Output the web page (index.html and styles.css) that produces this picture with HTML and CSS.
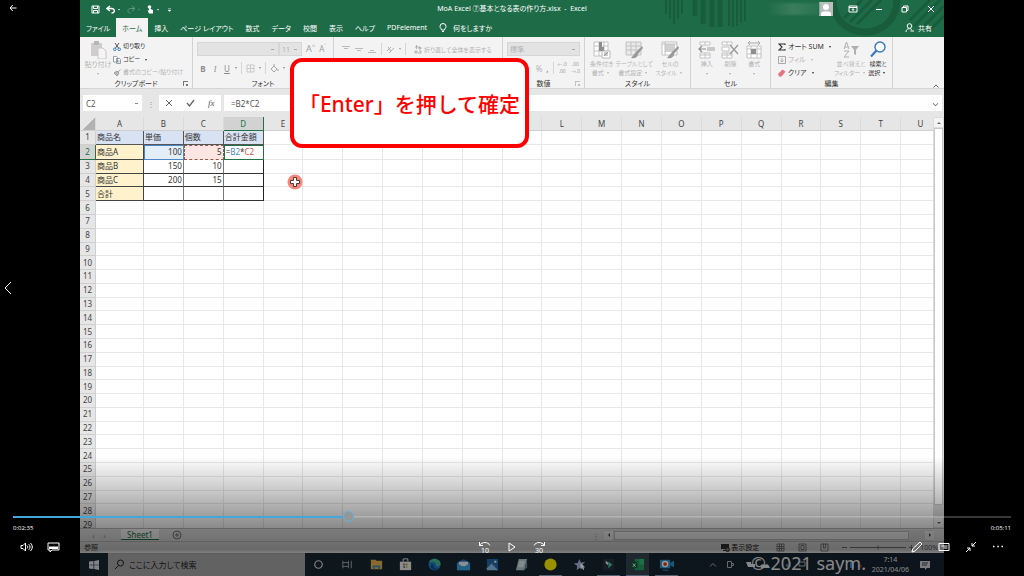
FILE: index.html
```html
<!DOCTYPE html>
<html lang="ja">
<head>
    <meta charset="UTF-8">
    <meta name="viewport" content="width=device-width, initial-scale=1.0">
    <title>MoA Excel ⑦基本となる表の作り方</title>
    <link rel="stylesheet" href="styles.css">
</head>
<body>
<div class="player">
    <div class="screen">
        <header class="excel-head">
            <svg class="pattern" viewBox="0 0 280 37" aria-hidden="true">
                <g stroke="#195c3c" fill="none">
                    <path stroke-width="2" d="M2 0v14M6 0v19M10 0v24M14 0v19M18 0v14"/>
                    <path stroke-width="5" d="M31 0v16M39 0v24M48 0v27M56 0v27"/>
                    <path stroke-width="2" d="M65 0v26M69 0v27M73 0v26M77 0v23M81 0v21"/>
                    <path stroke-width="7" d="M169 0c0 17 12 32 32 32s32-15 32-32"/>
                    <path stroke-width="3" d="M180 18l18-18M186 22l22-22M193 24l24-24M246 20l20-20M250 26l26-26M257 29l23-23M264 32l16-16"/>
                </g>
            </svg>
            <div class="titlebar">
                <div class="quick">
                    <svg width="9" height="9" viewBox="0 0 9 9"><path d="M1 1h7v7H1zM2.500 1v2.500h4V1M2.500 8V5.500h4V8" class="line"/></svg>
                    <svg width="14" height="9" viewBox="0 0 14 9"><path d="M4 1L1 3.500l3 2.500M1 3.500h4.500c4 0 3.500 4.500 0 4.500" class="line bold"/><path d="M12 4h2l-1 1.500z" fill="#fff"/></svg>
                    <svg width="14" height="9" viewBox="0 0 14 9" opacity=".3"><path d="M6 1l3 2.500L6 6M9 3.500H4.500C1 3.500 1 8 4.500 8" class="line"/><path d="M12 4h2l-1 1.500z" fill="#fff"/></svg>
                    <svg width="14" height="9" viewBox="0 0 14 9"><circle cx="3.500" cy="2" r="1.800" fill="#fff"/><path d="M3 1.500v4L1.500 5 3 8.500h4V5L4.500 4V1.500z" fill="#fff"/><path d="M11 4h2l-1 1.500z" fill="#fff"/></svg>
                    <svg width="6" height="9" viewBox="0 0 6 9"><path d="M2 3.500h3M2 5h3L3.500 6.500z" fill="#fff" stroke="#fff" stroke-width=".4"/></svg>
                </div>
                <h1 class="doc-title">MoA Excel ⑦基本となる表の作り方.xlsx &nbsp;-&nbsp; Excel</h1>
                <div class="window-tools">
                    <span class="user-name"></span>
                    <svg class="avatar" width="14" height="14" viewBox="0 0 14 14"><path d="M0 0h14v14H0z" fill="#b9bdbb"/><circle cx="7" cy="5" r="3" fill="#fff"/><path d="M2 14V11.500c0-3 10-3 10 0V14z" fill="#fff"/></svg>
                    <button aria-label="リボンの表示"><svg width="10" height="8" viewBox="0 0 10 8"><path d="M1 1h8v6H1zM1 2.500h8M5 6V3.800M3.800 4.800L5 3.600l1.200 1.200" class="line"/></svg></button>
                    <button aria-label="最小化"><svg width="8" height="8" viewBox="0 0 8 8"><path d="M1 4.500h6" class="line"/></svg></button>
                    <button aria-label="元に戻す"><svg width="8" height="8" viewBox="0 0 8 8"><path d="M1 2.500h4.500V7H1zM2.500 2.500V1H7v4.500H5.500" class="line"/></svg></button>
                    <button aria-label="閉じる"><svg width="8" height="8" viewBox="0 0 8 8"><path d="M1 1l6 6M7 1L1 7" class="line"/></svg></button>
                </div>
            </div>
            <nav class="tabs">
                <button>ファイル</button>
                <button class="active">ホーム</button>
                <button>挿入</button>
                <button>ページ レイアウト</button>
                <button>数式</button>
                <button>データ</button>
                <button>校閲</button>
                <button>表示</button>
                <button>ヘルプ</button>
                <button>PDFelement</button>
                <button class="tell"><svg width="8" height="10" viewBox="0 0 8 10"><path d="M2.500 7C2.500 5.500 1 5 1 3.500a3 3 0 0 1 6 0C7 5 5.500 5.500 5.500 7zM3 8.500h2" class="line"/></svg>何をしますか</button>
                <button class="share"><svg width="9" height="9" viewBox="0 0 9 9"><circle cx="4.500" cy="3" r="2.300" class="line"/><path d="M1 9c0-4 5-4 6-2M5.500 8H9" class="line"/></svg>共有</button>
            </nav>
        </header>

        <section class="ribbon">
            <div class="group">
                <div class="group-body">
                    <button class="big off paste">
                        <svg width="18" height="18" viewBox="0 0 18 18"><path d="M2 2h11v13H2z" fill="#cfcdcd"/><path d="M5 0h5v4H5z" fill="#b5b5b5"/><path d="M9 7h5l3 3v8H9z" fill="#f7f4f6" stroke="#c6c6c6"/></svg>
                        <span>貼り付け</span><i class="arrow"></i>
                    </button>
                    <div class="stack clip">
                        <button><svg width="8" height="8" viewBox="0 0 8 8"><path d="M2 0l3.500 5M6 0L2.500 5" stroke="#555" fill="none"/><circle cx="1.800" cy="6.300" r="1.300" stroke="#3c78b4" fill="none"/><circle cx="6.200" cy="6.300" r="1.300" stroke="#3c78b4" fill="none"/></svg>切り取り</button>
                        <button><svg width="8" height="8" viewBox="0 0 8 8"><path d="M.5.5h3l1 1V6h-4zM3.500 2.500h3l1 1v4h-4z" fill="#fff" stroke="#7c8996" stroke-width=".8"/><path d="M4.500 5h2M4.500 6h2" stroke="#3c78b4" stroke-width=".5"/></svg>コピー <i class="arrow"></i></button>
                        <button class="off"><svg width="8" height="8" viewBox="0 0 8 8"><path d="M7.500.5L5 3M1 4l3 3 2-3-2-2z" stroke="#a0a0a0" fill="#b9b9b9"/></svg>書式のコピー/貼り付け</button>
                    </div>
                </div>
                <div class="caption">クリップボード<i class="launcher"></i></div>
            </div>

            <div class="group">
                <div class="group-body tools">
                    <div class="tool-row">
                        <select class="combo wide" aria-label="フォント" disabled><option></option></select>
                        <select class="combo size" aria-label="フォント サイズ" disabled><option>11</option></select>
                        <button class="glyph">A<sup>^</sup></button>
                        <button class="glyph small">A<sup>˅</sup></button>
                    </div>
                    <div class="tool-row letters">
                        <button><b>B</b></button>
                        <button><em>I</em></button>
                        <button><u>U</u></button>
                        <i class="arrow"></i>
                        <span class="rule"></span>
                        <button aria-label="罫線"><svg width="9" height="9" viewBox="0 0 9 9"><path d="M1 1h7v7H1zM4.500 1v7M1 4.500h7" fill="none" stroke="#c9c9c9"/></svg></button>
                        <i class="arrow"></i>
                        <span class="rule"></span>
                        <button aria-label="塗りつぶし"><svg width="9" height="9" viewBox="0 0 9 9"><path d="M1 5l3-3 3 3-3 3zM4 0v3M8 5v2" fill="none" stroke="#a7a7a7"/></svg></button>
                        <i class="arrow"></i>
                    </div>
                </div>
                <div class="caption">フォント</div>
            </div>

            <div class="group">
                <div class="group-body tools">
                    <div class="tool-row aligns">
                        <svg width="9" height="9" viewBox="0 0 9 9"><path d="M0 1.500h8M2 3.500h4" stroke="#bbb"/></svg>
                        <svg width="9" height="9" viewBox="0 0 9 9"><path d="M0 3.500h8M2 5.500h4" stroke="#bbb"/></svg>
                        <svg width="9" height="9" viewBox="0 0 9 9"><path d="M0 7.500h8M2 5.500h4" stroke="#bbb"/></svg>
                        <span class="rule"></span>
                        <svg width="9" height="9" viewBox="0 0 9 9"><path d="M1 6l4-4M3 8l5-5M2 2l3 4" stroke="#b0b0b0"/></svg>
                        <i class="arrow"></i>
                        <span class="rule"></span>
                        <button class="wrap-text"><svg width="8" height="9" viewBox="0 0 8 9"><path d="M1 2h3M2.500 0v4M5 1v3h2V2.500H5M1 6h2v2H1zM5 6h2v2H4" fill="none" stroke="#aaa" stroke-width=".9"/></svg>折り返して全体を表示する</button>
                    </div>
                </div>
                <div class="caption">配置</div>
            </div>

            <div class="group">
                <div class="group-body tools">
                    <div class="tool-row">
                        <select class="combo full" aria-label="表示形式" disabled><option>標準</option></select>
                    </div>
                    <div class="tool-row end">
                        <button class="off">%</button>
                        <button><b>,</b></button>
                        <span class="rule"></span>
                        <button class="decimal">←.0<br>.00</button>
                        <button class="decimal">.00<br>→.0</button>
                    </div>
                </div>
                <div class="caption">数値<i class="launcher pale"></i></div>
            </div>

            <div class="group">
                <div class="group-body even">
                    <button class="big off">
                        <svg width="18" height="18" viewBox="0 0 18 18"><path d="M1 1h14v14H1zM1 5h14M1 10h14M6 1v14M11 1v14" fill="#fff" stroke="#c2c2c2"/><path d="M6 1h3v5h2v4H6z" fill="#8e8e8e"/><path d="M9 10h8v7H9z" fill="#fff" stroke="#bbb"/><path d="M11 15l4-4M11 12h4M11 14h4" stroke="#999"/></svg>
                        <span>条件付き</span><span>書式<i class="arrow"></i></span>
                    </button>
                    <button class="big off">
                        <svg width="18" height="18" viewBox="0 0 18 18"><path d="M1 1h15v13H1z" fill="#e9e9e9" stroke="#c2c2c2"/><path d="M1 5h15M1 9h15M6 1v13M11 1v13" stroke="#c2c2c2"/><path d="M17 5l-6 6-5 6c4 1 7-1 7-4l5-6z" fill="#999"/></svg>
                        <span>テーブルとして</span><span>書式設定<i class="arrow"></i></span>
                    </button>
                    <button class="big off">
                        <svg width="18" height="18" viewBox="0 0 18 18"><path d="M1 1h15v13H1z" fill="#fff" stroke="#c2c2c2"/><path d="M4 3h10v8H4z" fill="#d0d0d0"/><path d="M1 3h15M4 1v13" stroke="#c2c2c2"/><path d="M17 5l-6 6-5 6c4 1 7-1 7-4l5-6z" fill="#999"/></svg>
                        <span>セルの</span><span>スタイル<i class="arrow"></i></span>
                    </button>
                </div>
                <div class="caption">スタイル</div>
            </div>

            <div class="group">
                <div class="group-body even">
                    <button class="big off">
                        <svg width="18" height="18" viewBox="0 0 18 18"><path d="M2 1h10v3H2zM7 1v3M2 12h10v5H2zM7 12v5M2 14h10" fill="#fff" stroke="#c2c2c2"/><path d="M9 6h8v4H9z" fill="#c9c9c9"/><path d="M8 8H1M4 5L1 8l3 3" fill="none" stroke="#8e8e8e" stroke-width="1.200"/></svg>
                        <span>挿入</span><i class="arrow"></i>
                    </button>
                    <button class="big off">
                        <svg width="18" height="18" viewBox="0 0 18 18"><path d="M1 1h10v3H1zM6 1v3M1 12h10v5H1zM6 12v5M1 14h10M1 6h7v4H1z" fill="#fff" stroke="#c2c2c2"/><path d="M9 4l8 9M17 4l-8 9" stroke="#9b9b9b" stroke-width="1.400"/></svg>
                        <span>削除</span><i class="arrow"></i>
                    </button>
                    <button class="big off">
                        <svg width="18" height="18" viewBox="0 0 18 18"><path d="M2 5h14v12H2zM2 8h14M2 13h14M6 5v12M12 5v12" fill="#fff" stroke="#c2c2c2"/><path d="M6 8h5v5H6z" fill="#8e8e8e"/><path d="M3 2h12M5 0L3 2l2 2M13 0l2 2-2 2" fill="none" stroke="#aaa"/></svg>
                        <span>書式</span><i class="arrow"></i>
                    </button>
                </div>
                <div class="caption">セル</div>
            </div>

            <div class="group">
                <div class="group-body edit">
                    <div class="stack">
                        <button><svg width="8" height="8" viewBox="0 0 8 8"><path d="M7 2V1H1l3 3-3 3h6V6" fill="none" stroke="#333" stroke-width="1.200"/></svg>オート SUM <i class="arrow"></i></button>
                        <button class="off"><svg width="8" height="8" viewBox="0 0 8 8"><path d="M.5.500h7v7h-7zM4 2v4M2.500 4.500L4 6l1.500-1.500" fill="none" stroke="#a9a9a9"/></svg>フィル <i class="arrow"></i></button>
                        <button><svg width="8" height="8" viewBox="0 0 8 8"><path d="M0 5l4.500-4.500 3 2L3.500 7.500H1z" fill="#e8707c"/></svg>クリア <i class="arrow"></i></button>
                    </div>
                    <button class="big off">
                        <svg width="18" height="18" viewBox="0 0 18 18"><path d="M2 8l2.500-7L7 8M3 6h3M2 10h5l-5 6h5" fill="none" stroke="#b0b0b0"/><path d="M9 5h8l-3 4v5l-2-1V9z" fill="#b0b0b0"/></svg>
                        <span>並べ替えと</span><span>フィルター<i class="arrow"></i></span>
                    </button>
                    <button class="big">
                        <svg width="18" height="18" viewBox="0 0 18 18"><circle cx="11" cy="6" r="5" fill="#fff" stroke="#3d7ab8" stroke-width="1.500"/><path d="M7.500 9.500L2 15.500" stroke="#3d7ab8" stroke-width="2.200"/></svg>
                        <span>検索と</span><span>選択<i class="arrow"></i></span>
                    </button>
                </div>
                <div class="caption">編集</div>
            </div>
            <button class="collapse" aria-label="リボンを折りたたむ"><svg width="6" height="4" viewBox="0 0 6 4"><path d="M.5 3.500L3 1l2.500 2.500" fill="none" stroke="#666"/></svg></button>
        </section>

        <section class="formula-bar">
            <select class="name-box" aria-label="名前ボックス"><option>C2</option></select>
            <span class="dots">⋮</span>
            <div class="formula-tools">
                <button aria-label="キャンセル"><svg width="8" height="8" viewBox="0 0 8 8"><path d="M1 1l6 6M7 1L1 7" fill="none" stroke="#666"/></svg></button>
                <button aria-label="入力"><svg width="9" height="8" viewBox="0 0 9 8"><path d="M1 4l2.500 3L8 1" fill="none" stroke="#666" stroke-width="1.300"/></svg></button>
                <button class="fx">fx</button>
            </div>
            <input class="formula" type="text" value="=B2*C2" aria-label="数式">
            <i class="expand"></i>
        </section>

        <section class="sheet">
            <div class="sheet-view">
                <table class="cells">
                    <colgroup><col class="col-head"><col class="col-a"></colgroup>
                    <thead><tr id="columns"><th class="corner"></th></tr></thead>
                    <tbody id="rows"></tbody>
                </table>
            </div>
            <div class="scroll-v"><i class="up"></i><span></span><i class="down"></i></div>
        </section>

        <section class="sheet-tabs">
            <span class="nav-arrow">‹</span><span class="nav-arrow">›</span>
            <button class="sheet-tab">Sheet1</button>
            <button class="add-sheet" aria-label="新しいシート"><svg width="10" height="10" viewBox="0 0 10 10"><circle cx="5" cy="5" r="4" fill="none" stroke="#777"/><path d="M3 5h4M5 3v4" stroke="#777"/></svg></button>
            <span class="dots grip">⋮</span>
            <div class="scroll-h"><i class="left"></i><span></span><i class="right"></i></div>
        </section>

        <section class="status">
            <span>参照</span>
            <div class="status-right">
                <span class="display-settings"><svg width="9" height="9" viewBox="0 0 9 9"><path d="M0 1h8v5H0zM2 7h3v1H2z" fill="#333"/><circle cx="6.500" cy="6.500" r="2" fill="#888" stroke="#333"/></svg>表示設定</span>
                <svg width="9" height="9" viewBox="0 0 9 9"><path d="M1 1h7v7H1zM1 3.500h7M1 5.500h7M3.500 1v7M5.500 1v7" fill="none" stroke="#666" stroke-width=".8"/></svg>
                <svg width="9" height="9" viewBox="0 0 9 9"><path d="M1 1h7v7H1zM3 2.500h3v4H3z" fill="none" stroke="#666" stroke-width=".8"/></svg>
                <svg width="9" height="9" viewBox="0 0 9 9"><path d="M1 1h7v7H1zM3.500 1v4h2V1" fill="none" stroke="#666" stroke-width=".8"/></svg>
                <span class="zoom"><svg width="74" height="7" viewBox="0 0 74 7"><path d="M0 3.500h5M8 3.500h56M36 1.500v4M67 3.500h5M69.500 1v5" stroke="#777"/></svg>100%</span>
            </div>
        </section>

        <footer class="taskbar">
            <button class="start" aria-label="スタート"><svg width="10" height="10" viewBox="0 0 10 10"><path d="M0 1.500L4.500 1v3.700H0zM5.200.9L10 0v4.700H5.200zM0 5.300h4.500V9L0 8.500zM5.200 5.300H10V10l-4.800-.9z" fill="#d8dde0"/></svg></button>
            <label class="search">
                <svg width="11" height="11" viewBox="0 0 11 11"><circle cx="6.500" cy="4" r="3" fill="none" stroke="#222"/><path d="M4.500 6.500L1 10" stroke="#222"/></svg>
                <input type="text" placeholder="ここに入力して検索" aria-label="検索">
            </label>
            <div class="apps">
                <span><svg viewBox="0 0 16 16"><circle cx="8" cy="8" r="4" fill="none" stroke="#dadada" stroke-width="1.300"/></svg></span>
                <span><svg viewBox="0 0 16 16"><path d="M3 4v2h6V4M3 12v-2h6v2M3 6v4M9 6v4M12 4v8" fill="none" stroke="#a9b0b4"/></svg></span>
                <span><svg viewBox="0 0 16 16"><path d="M2 3h5l1 1h6v9H2z" fill="#e4b04a"/><path d="M4 13V9h8v4h-2v-2H6v2z" fill="#3d86c6"/></svg></span>
                <span><svg viewBox="0 0 16 16"><path d="M2 5h12v9H2z" fill="#e8e8e8"/><path d="M5.500 5V2h5v3" fill="none" stroke="#e8e8e8"/><path d="M5.500 7h2v2h-2z" fill="#d9512c"/><path d="M8.200 7h2v2h-2z" fill="#7fb02e"/><path d="M5.500 9.700h2v2h-2z" fill="#2b95d6"/><path d="M8.200 9.700h2v2h-2z" fill="#f0b52a"/></svg></span>
                <span><svg viewBox="0 0 16 16"><circle cx="8" cy="8" r="6.500" fill="#1d78c8"/><path d="M2 6c3-7 12-4 12.500 1 0 3-5 4-5 1 0-3-4-4-7.500-2z" fill="#48b890"/><path d="M7 8c-1 4 3 5 6 4-3 3-8 2-9-1-.5-2 1-4 3-3z" fill="#0e4f8c"/></svg></span>
                <span><svg viewBox="0 0 16 16"><path d="M1 6l7-4 7 4v8H1z" fill="#1b6fb5"/><path d="M3 5h10v5H3z" fill="#e8eef2"/><path d="M1 6l7 5 7-5v8H1z" fill="#3aa0e0"/></svg></span>
                <span><svg viewBox="0 0 16 16"><path d="M2 2h12v12H2z" fill="#2468a8"/><path d="M2 12l5-5 7 7H2z" fill="#8ac0e8"/><circle cx="11" cy="5" r="1.300" fill="#d8e8f4"/></svg></span>
                <span><svg viewBox="0 0 16 16"><path d="M5 2h9l-3 12H2z" fill="#a8c6cc"/><path d="M6 4h6l-2 7H4z" fill="#d9e6e6"/><path d="M11 14l3-12v9z" fill="#698b93"/></svg></span>
                <span class="open"><svg viewBox="0 0 16 16"><circle cx="8" cy="8" r="6.500" fill="#fff200"/></svg></span>
                <span><svg viewBox="0 0 16 16"><path d="M8 2l1.500 4L14 5l-3 3.500L13 13l-4-2-4 3 .500-4.500L2 7l4-.5z" fill="#a2b4dc"/><path d="M9 6l5 5-2 .3 1 2-1.200.5-1-2L9 13z" fill="#fff"/></svg></span>
                <span class="open"><svg viewBox="0 0 16 16"><path d="M2 2h12v12H2z" fill="#26323a"/><path d="M5 4l3 2v3L5 7z" fill="#e2e9e8"/><path d="M8 5l4 3-4 4V9l1-1-1-1z" fill="#4ac8ac"/></svg></span>
                <span class="open current"><svg viewBox="0 0 16 16"><path d="M5 2h10v12H5z" fill="#249a5e"/><path d="M10 2h5v6h-5z" fill="#35b877"/><path d="M1 5h7v7H1z" fill="#0e5c36"/><path d="M3 7l3 3.500M6 7l-3 3.500" stroke="#fff"/></svg></span>
                <span class="open"><svg viewBox="0 0 16 16"><path d="M1 3h11v9H1z" fill="#2d93c4"/><path d="M12 6l4-2v7l-4-2z" fill="#2d93c4"/><circle cx="6.500" cy="7.500" r="3.500" fill="#fff"/><circle cx="6.500" cy="7.500" r="2" fill="#e03820"/><path d="M4 14h6" stroke="#2d93c4"/></svg></span>
            </div>
            <div class="tray">
                <svg width="8" height="8" viewBox="0 0 8 8"><path d="M1 5.500l3-3 3 3" fill="none" stroke="#a9b0b8"/></svg>
                <svg width="9" height="9" viewBox="0 0 9 9"><path d="M1.500 1.500h4v6h-4zM5.500 3.500h2v2h-2z" fill="none" stroke="#a9b0b8"/></svg>
                <svg width="30" height="9" viewBox="0 0 30 9"><path d="M2 2h5v2h4v3H4zM17 8c-2-3 2-5 4-3 3-2 4 1 5 3z" fill="#dfe4e8"/></svg>
                <svg width="80" height="9" viewBox="0 0 80 9"><path d="M4 7V4M7 7V2M16 2h6v4h-6z" fill="none" stroke="#a9b0b8"/><path d="M67 1h4v7h-4z" fill="#2f80d8"/><circle cx="77" cy="6" r="1.500" fill="#c03838"/></svg>
                <time class="clock"><span>7:14</span><span>2021/04/06</span></time>
                <svg class="notice" width="10" height="10" viewBox="0 0 10 10"><path d="M0 1h10v7H7L5 10V8H0z" fill="#c9cdd2"/><path d="M2 3h6M2 5h5" stroke="#394350"/></svg>
            </div>
        </footer>

        <!-- 動画に重ねる説明 -->
        <div class="callout">「Enter」を押して確定</div>
        <svg class="pointer" width="16" height="16" viewBox="0 0 16 16"><circle cx="8" cy="8" r="7.500" fill="#f6857b"/><path d="M6.500 3.500h3v3h3v3h-3v3h-3v-3h-3v-3h3z" fill="#fff" stroke="#4c3a3a"/></svg>
        <div class="watermark">© 2021 saym.</div>
    </div>

    <div class="shade"></div>
    <button class="back" aria-label="戻る"><svg width="8" height="8" viewBox="0 0 8 8"><path d="M7.500 4H1M3.800 1L1 4l2.800 3" class="line"/></svg></button>
    <button class="previous" aria-label="前へ"><svg width="8" height="14" viewBox="0 0 8 14"><path d="M7 1L1 7l6 6" class="line"/></svg></button>

    <div class="controls">
        <input class="seek" type="range" min="0" max="100" step="0.1" value="33.4" aria-label="再生位置" style="--played: 33.4%">
        <div class="times"><span>0:02:35</span><span>0:05:11</span></div>
        <div class="buttons">
            <div>
                <button aria-label="音量"><svg width="13" height="12" viewBox="0 0 13 12"><path d="M1 4.500h2L5.500 2v8L3 7.500H1zM7 4.500c1 1 1 2 0 3M8.700 3.200c1.800 1.600 1.800 4 0 5.600M10.400 2c2.500 2.300 2.500 5.700 0 8" class="line"/></svg></button>
                <button aria-label="字幕"><svg width="13" height="12" viewBox="0 0 13 12"><path d="M1 2h11v7H5l-2 2V9H1z" class="line"/><path d="M2 5.500h9V8H2z" fill="#fff"/></svg></button>
            </div>
            <div>
                <button aria-label="10秒戻す"><svg width="14" height="14" viewBox="0 0 14 14"><path d="M1.500 2v3.500H5M1.500 5.500C4 1.500 10 1.500 12 5.500" class="line"/><text x="3" y="13">10</text></svg></button>
                <button aria-label="再生"><svg width="10" height="12" viewBox="0 0 10 12"><path d="M2 2l6 4-6 4z" class="line"/></svg></button>
                <button aria-label="30秒進む"><svg width="14" height="14" viewBox="0 0 14 14"><path d="M12.500 2v3.500H9M12.500 5.500C10 1.500 4 1.500 2 5.500" class="line"/><text x="3" y="13">30</text></svg></button>
            </div>
            <div>
                <button aria-label="編集"><svg width="12" height="12" viewBox="0 0 12 12"><path d="M1 11l1-3.500 7-6.500 2 2-7 7z" class="line"/></svg></button>
                <button aria-label="ミニ表示"><svg width="12" height="12" viewBox="0 0 12 12"><path d="M1 2.500h10v7H1z" class="line"/><path d="M3.500 5h6M5.500 7h4" class="line"/></svg></button>
                <button aria-label="全画面の終了"><svg width="12" height="12" viewBox="0 0 12 12"><path d="M11 1L7 5M7 2v3h3M1 11l4-4M2 7h3v3" class="line"/></svg></button>
                <button aria-label="その他"><svg width="12" height="12" viewBox="0 0 12 12"><path d="M1 5.500h1.500M5.300 5.500h1.500M9.500 5.500H11" class="line bold"/></svg></button>
            </div>
        </div>
    </div>
</div>
<script src="script.js"></script>
</body>
</html>
```

FILE: styles.css
```css
* {
    box-sizing: border-box;
}
body {
    margin: 0;
    background: #000;
    font-family: "Noto Sans", "Noto Sans CJK JP", sans-serif;
    font-size: 7px;
    font-feature-settings: "palt";
    color: #333;
}
button, input, select {
    font: inherit;
    font-feature-settings: inherit;
    color: inherit;
    background: none;
    border: 0;
    padding: 0;
    margin: 0;
    appearance: none;
}
button {
    white-space: nowrap;
}
svg {
    display: block;
    flex: none;
}
.line {
    fill: none;
    stroke: #fff;
    stroke-width: 1;
}
.line.bold {
    stroke-width: 1.5;
}
.player {
    position: relative;
    height: 100vh;
    overflow: hidden;
}
.screen {
    position: relative;
    display: flex;
    flex-direction: column;
    height: 100%;
    margin: 0 80px;
    background: #e6e6e6;
    overflow: hidden;
}

/* タイトルバーとタブ */
.excel-head {
    position: relative;
    background: #1e6b47;
    color: #fff;
}
.pattern {
    position: absolute;
    right: 0;
    top: 0;
    height: 37px;
}
.titlebar {
    position: relative;
    display: grid;
    grid-template-columns: 1fr auto 1fr;
    align-items: center;
    height: 18px;
}
.quick {
    display: flex;
    gap: 6px;
    padding-left: 11px;
}
.doc-title {
    margin: 0;
    font-size: 7px;
    font-weight: 400;
    line-height: 10px;
}
.window-tools {
    display: flex;
    align-items: center;
    justify-content: flex-end;
}
.window-tools button {
    display: flex;
    justify-content: center;
    width: 26px;
}
.user-name {
    width: 52px;
    height: 12px;
    background: linear-gradient(90deg, #1e6b47, #3b7d5d, #2b7350);
    filter: blur(1px);
}
.avatar {
    margin-right: 7px;
}
.tabs {
    position: relative;
    display: flex;
    height: 19px;
}
.tabs button {
    display: flex;
    align-items: center;
    gap: 6px;
    padding: 0 6px;
}
.tabs .active {
    background: #f3f3f3;
    color: #1e6b47;
}
.tabs .share {
    margin-left: auto;
    padding-right: 12px;
    gap: 4px;
}

/* リボン */
.ribbon {
    position: relative;
    display: grid;
    grid-template-columns: 113fr 141fr 169fr 82fr 106fr 80fr 122fr 51fr;
    height: 52px;
    background: #f3f3f3;
    border-bottom: 1px solid #d4d4d4;
}
.group {
    display: flex;
    flex-direction: column;
    min-width: 0;
    padding: 4px 4px 0;
    border-right: 1px solid #d2d2d2;
}
.group-body {
    display: flex;
    flex: 1;
    min-height: 0;
}
.caption {
    position: relative;
    height: 9px;
    line-height: 10px;
    text-align: center;
}
.launcher {
    position: absolute;
    right: 0;
    top: 2px;
    width: 5px;
    height: 5px;
    border-top: 1px solid #777;
    border-left: 1px solid #777;
}
.launcher::after {
    content: "";
    position: absolute;
    right: 0;
    bottom: 0;
    width: 2px;
    height: 2px;
    background: #777;
}
.launcher.pale {
    opacity: .4;
}
.off {
    color: #b3b3b3;
}
.arrow {
    display: inline-block;
    margin: 0 3px;
    border: 1px solid transparent;
    border-top: 2px solid currentColor;
    border-bottom: 0;
    vertical-align: middle;
}
.big {
    display: flex;
    flex-direction: column;
    align-items: center;
    line-height: 9px;
}
.big svg {
    margin-bottom: 1px;
}
.big > .arrow {
    margin-top: 4px;
}
.paste {
    width: 28px;
}
.stack {
    display: flex;
    flex-direction: column;
    justify-content: space-between;
    padding-bottom: 1px;
}
.stack button {
    display: flex;
    align-items: center;
    gap: 2px;
    line-height: 11px;
}
.clip {
    padding-left: 1px;
    font-size: 6px;
}
.even {
    justify-content: space-around;
    font-size: 6px;
}
.edit {
    justify-content: space-between;
    padding: 0 3px;
}
.edit .big {
    font-size: 6px;
}
.tools {
    flex-direction: column;
    gap: 5px;
    padding-top: 1px;
}
.tool-row {
    display: flex;
    align-items: center;
    gap: 4px;
    height: 14px;
    color: #a0a0a0;
}
.tool-row .arrow {
    margin: 0;
}
.combo {
    height: 14px;
    padding: 0 2px;
    background: linear-gradient(#aaa, #aaa) no-repeat right 4px center / 3px 1px #e3e3e3;
    border: 1px solid #d6d6d6;
    color: #b5b5b5;
    opacity: 1;
}
.combo.wide {
    flex: 1;
    margin-right: -4px;
}
.combo.size {
    width: 23px;
}
.combo.full {
    flex: 1;
}
.glyph {
    font-size: 9px;
    line-height: 10px;
}
.glyph.small {
    font-size: 8px;
    margin-right: 3px;
}
.glyph sup {
    font-size: 6px;
    line-height: 0;
}
.letters {
    gap: 4px;
    padding-left: 2px;
    font-size: 8px;
    color: #8c8c8c;
}
.letters button {
    min-width: 8px;
}
.letters em {
    font-family: "Liberation Serif", serif;
}
.rule {
    width: 1px;
    height: 12px;
    background: #d6d6d6;
}
.aligns {
    padding-left: 4px;
}
.wrap-text {
    display: flex;
    align-items: center;
    gap: 2px;
    margin-left: 4px;
    font-size: 6px;
    color: #b3b3b3;
}
.end {
    justify-content: flex-end;
    font-size: 8px;
}
.decimal {
    font-size: 5px;
    line-height: 7px;
}
.collapse {
    align-self: end;
    justify-self: end;
    padding: 0 5px;
}

/* 数式バー */
.formula-bar {
    position: relative;
    display: flex;
    align-items: center;
    height: 28px;
    padding: 0 2px 0 3px;
    font-size: 8px;
    color: #555;
}
.name-box {
    width: 59px;
    height: 16px;
    padding: 0 3px;
    background: linear-gradient(#888, #888) no-repeat right 4px center / 3px 1px #fff;
}
.dots {
    width: 17px;
    text-align: center;
    color: #999;
}
.formula-tools {
    display: flex;
    align-items: center;
    justify-content: space-around;
    width: 62px;
    height: 16px;
    background: #fff;
}
.fx {
    font-family: "Liberation Serif", serif;
    font-style: italic;
    font-size: 9px;
}
.formula {
    flex: 1;
    height: 16px;
    margin-left: 3px;
    padding: 0 7px;
    background: #fff;
}
.expand {
    position: absolute;
    right: 6px;
    width: 5px;
    height: 5px;
    border-right: 1px solid #666;
    border-bottom: 1px solid #666;
    transform: rotate(45deg) scale(.8);
}

/* シート */
.sheet {
    display: flex;
    flex: 1;
    min-height: 0;
    background: #fff;
}
.sheet-view {
    flex: 1;
    min-width: 0;
    overflow: hidden;
}
.cells {
    width: calc(100% + 8px);
    height: calc(100% + 4px);
    table-layout: fixed;
    border-collapse: separate;
    border-spacing: 0;
    font-size: 8px;
    line-height: 10px;
}
.col-head {
    width: 16px;
}
.col-a {
    width: 48px;
}
.cells th, .cells td {
    padding: 0 1px;
    border-right: 1px solid #e8e8e8;
    border-bottom: 1px solid #e8e8e8;
    white-space: nowrap;
    overflow: hidden;
}
.cells th {
    padding: 0;
    background: #e6e6e6;
    border-color: #cfcfcf;
    font-weight: 400;
    color: #444;
}
.cells thead th {
    height: 14px;
    border-right-color: #dadada;
}
.cells .corner {
    background: linear-gradient(135deg, #e6e6e6 55%, #b2b2b2 55%);
}
.cells th.selected {
    background: #d2d2d2;
    color: #217346;
    border-color: #217346;
}
.cells td.title {
    background: #d9e2f3;
    border-color: #555;
}
.cells td.item {
    background: #fff2cc;
    border-color: #444;
}
.cells td.value {
    border-color: #333;
    border-right-color: #777;
    text-align: right;
}
.cells td.last {
    border-right-color: #222;
}
.cells td.ref-b {
    background: #e4eef8;
    border: 1px solid #4a86c8;
}
.cells td.ref-c {
    background: #fbe6e4;
    border: 1px dashed #8f5a4a;
}
.cells td.editing {
    border: 1px solid #217346;
    text-align: left;
}
.blue {
    color: #4a86c8;
}
.red {
    color: #c8544a;
}
.scroll-v {
    display: flex;
    flex-direction: column;
    width: 11px;
    padding: 1px;
    background: #dcdcdc;
}
.scroll-v span {
    flex: 1;
    margin: 1px 0 13px;
    background: #fff;
    border: 1px solid #c8c8c8;
}
.scroll-v i, .scroll-h i {
    display: flex;
    align-items: center;
    justify-content: center;
    width: 9px;
    height: 9px;
    background: #f4f4f4;
}
.scroll-v i::after, .scroll-h i::after {
    content: "";
    border: 2px solid transparent;
}
.scroll-v .up::after {
    border-bottom-color: #666;
    border-top: 0;
}
.scroll-v .down::after {
    border-top-color: #666;
    border-bottom: 0;
}
.scroll-h .left::after {
    border-right-color: #444;
    border-left: 0;
}
.scroll-h .right::after {
    border-left-color: #444;
    border-right: 0;
}
.sheet-tabs {
    display: flex;
    align-items: center;
    height: 13px;
    padding: 0 10px 0 8px;
    border-top: 1px solid #b9b9b9;
    font-size: 8px;
}
.nav-arrow {
    width: 11px;
    text-align: center;
    color: #999;
}
.sheet-tab {
    align-self: flex-start;
    width: 38px;
    height: 11px;
    margin-left: 11px;
    line-height: 9px;
    background: #fff;
    border-bottom: 1px solid #217346;
    color: #217346;
}
.add-sheet {
    margin-left: 13px;
}
.grip {
    margin-left: auto;
}
.scroll-h {
    display: flex;
    align-items: center;
    width: 39%;
    height: 11px;
    background: #dcdcdc;
}
.scroll-h span {
    flex: 1;
    height: 9px;
    margin: 0 16px 0 1px;
    background: #f8f8f8;
    border: 1px solid #c2c2c2;
}
.status {
    display: flex;
    align-items: center;
    justify-content: space-between;
    height: 12px;
    padding: 0 6px 0 4px;
    border-top: 1px solid #c4c4c4;
    line-height: 10px;
}
.status-right {
    display: flex;
    align-items: center;
    gap: 13px;
}
.display-settings {
    display: flex;
    gap: 1px;
    margin-right: 4px;
    color: #111;
}
.zoom {
    display: flex;
    align-items: center;
    gap: 4px;
    color: #666;
}

/* タスクバー */
.taskbar {
    display: flex;
    height: 23px;
    background: linear-gradient(90deg, #15262f 30%, #14202e);
}
.start {
    display: flex;
    align-items: center;
    justify-content: center;
    width: 28px;
}
.search {
    display: flex;
    align-items: center;
    gap: 4px;
    width: 197px;
    padding-left: 6px;
    background: #a3a3a3;
}
.search input {
    flex: 1;
    min-width: 0;
    font-size: 8px;
}
.search input::placeholder {
    color: #222;
    opacity: 1;
}
.apps {
    display: flex;
}
.apps span {
    display: flex;
    align-items: center;
    justify-content: center;
    width: 23px;
    margin-right: 6px;
    border-bottom: 1px solid transparent;
}
.apps span:first-child {
    margin-left: 2px;
}
.apps svg {
    width: 15px;
    height: 15px;
}
.apps .open {
    border-color: #8ba0c0;
}
.apps .current {
    background: #33424c;
}
.tray {
    display: flex;
    align-items: center;
    gap: 9px;
    margin-left: auto;
    padding-right: 14px;
    color: #e2e2e2;
}
.clock {
    display: flex;
    flex-direction: column;
    align-items: center;
    line-height: 10px;
}
.notice {
    margin-left: 2px;
}

/* 動画の上に乗る要素 */
.callout {
    position: absolute;
    left: 210px;
    top: 58px;
    display: flex;
    align-items: center;
    justify-content: center;
    width: 239px;
    height: 90px;
    background: #fff;
    border: 4px solid #f00;
    border-radius: 12px;
    font-size: 21px;
    font-weight: 500;
    font-feature-settings: normal;
    white-space: nowrap;
    color: #f00;
}
.pointer {
    position: absolute;
    left: 207px;
    top: 174px;
}
.watermark {
    position: absolute;
    right: 78px;
    bottom: 0;
    font-size: 18px;
    line-height: 26px;
    color: #e2e2e2;
}
.shade {
    position: absolute;
    left: 0;
    right: 0;
    bottom: 0;
    height: 120px;
    background: linear-gradient(rgba(0, 0, 0, 0), rgba(0, 0, 0, .22) 30%, rgba(0, 0, 0, .46) 60%, rgba(0, 0, 0, .54) 78%, rgba(0, 0, 0, .4) 82%);
}
.back, .previous {
    position: absolute;
    left: 9px;
    top: 4px;
}
.previous {
    left: 4px;
    top: 50%;
    transform: translateY(-50%);
}
.controls {
    position: absolute;
    left: 0;
    right: 0;
    bottom: 0;
    padding: 0 13px 18px;
    color: #fff;
}
.seek {
    display: block;
    width: 100%;
    height: 12px;
}
.seek::-webkit-slider-runnable-track {
    height: 2px;
    background: linear-gradient(90deg, #45a6da var(--played), rgba(255, 255, 255, .22) var(--played));
}
.seek::-webkit-slider-thumb {
    appearance: none;
    width: 11px;
    height: 11px;
    margin-top: -5px;
    background: #969696;
    border: 1px solid #58b6e8;
    border-radius: 50%;
}
.times {
    display: flex;
    justify-content: space-between;
    height: 13px;
    font-family: "Open Sans", sans-serif;
    font-size: 6px;
    line-height: 10px;
}
.buttons {
    display: grid;
    grid-template-columns: 1fr auto 1fr;
    height: 22px;
}
.buttons div {
    display: flex;
}
.buttons div:last-child {
    justify-content: flex-end;
}
.buttons button {
    display: flex;
    align-items: center;
    justify-content: center;
    width: 27px;
}
.buttons text {
    font-size: 7px;
    fill: #fff;
}
```

FILE: script.js
```js
const letters = "ABCDEFGHIJKLMNOPQRSTU".split("");
const data = {
    1: ["商品名", "単価", "個数", "合計金額"],
    2: ["商品A", "100", "5", '=<span class="blue">B2</span>*<span class="red">C2</span>'],
    3: ["商品B", "150", "10", ""],
    4: ["商品C", "200", "15", ""],
    5: ["合計", "", "", ""]
};

function cellClass(row, col) {
    if (row > 5 || col > 3) return "";
    if (row === 1) return "title";
    if (col === 0) return "item";
    let name = "value";
    if (col === 3) name += " last";
    if (row === 2) name += [" ", " ref-b", " ref-c", " editing"][col];
    return name;
}

// 列見出し
letters.forEach(letter => {
    const th = document.createElement("th");
    th.textContent = letter;
    if (letter === "D") th.className = "selected";
    document.getElementById("columns").appendChild(th);
});

// 行
for (let row = 1; row <= 29; row++) {
    const tr = document.createElement("tr");
    const th = document.createElement("th");
    th.textContent = row;
    if (row === 2) th.className = "selected";
    tr.appendChild(th);
    letters.forEach((letter, col) => {
        const td = document.createElement("td");
        td.className = cellClass(row, col);
        td.innerHTML = data[row] ? data[row][col] || "" : "";
        tr.appendChild(td);
    });
    document.getElementById("rows").appendChild(tr);
}
```
